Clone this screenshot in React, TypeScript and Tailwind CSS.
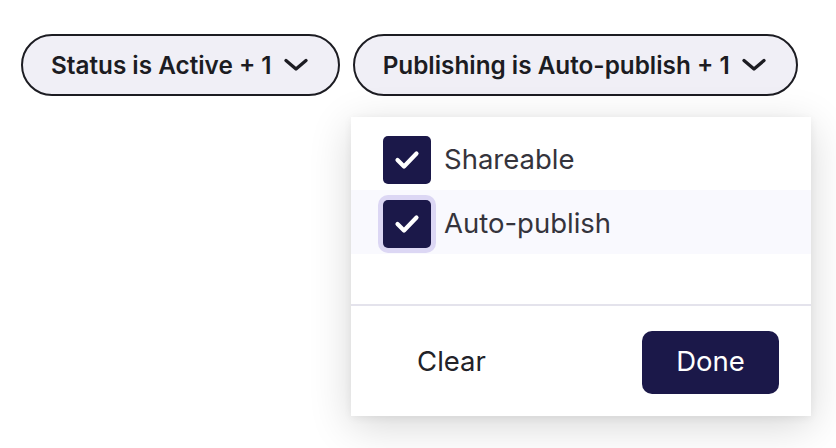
import React from 'react';

const Chevron = () => (
  <svg width="24" height="14" viewBox="0 0 24 14" fill="none" className="shrink-0">
    <path d="M2 2.5L12 11L22 2.5" stroke="#1c1c22" strokeWidth="3.3" strokeLinecap="round" strokeLinejoin="round" />
  </svg>
);

const Check = () => (
  <svg width="48" height="48" viewBox="0 0 48 48" fill="none">
    <path d="M14.5 24L21 30.5L33.5 17.5" stroke="white" strokeWidth="4.2" strokeLinecap="round" strokeLinejoin="round" />
  </svg>
);

const FilterPill = ({ label }: { label: string }) => (
  <button
    type="button"
    className="flex items-center gap-[12px] h-[62px] pl-[28px] pr-[30px] rounded-full border-2 border-[#1c1c22] bg-[#f0eff6] text-[24.3px] leading-none font-semibold text-[#1c1c22]"
  >
    <span>{label}</span>
    <Chevron />
  </button>
);

const OptionRow = ({ label, focused }: { label: string; focused?: boolean }) => (
  <div className={`flex items-center h-[64px] pl-[32px] pt-[3px] gap-[13px] ${focused ? 'bg-[#f9f9fe]' : ''}`}>
    <div
      className={`w-[48px] h-[48px] rounded-[5px] bg-[#1b1849] flex items-center justify-center shrink-0 ${
        focused ? 'ring-[5px] ring-[#dcd7f4]' : ''
      }`}
    >
      <Check />
    </div>
    <span className="text-[27.5px] leading-none text-[#35343c]">{label}</span>
  </div>
);

export default function App() {
  return (
    <div className="relative w-[836px] h-[448px] bg-white overflow-hidden" style={{ fontFamily: 'Inter, "Noto Sans", sans-serif' }}>
      <div className="flex gap-[13px] pl-[21px] pt-[34px]">
        <FilterPill label="Status is Active + 1" />
        <FilterPill label="Publishing is Auto-publish + 1" />
      </div>

      {/* Dropdown for publishing filter */}
      <div className="absolute left-[351px] top-[117px] w-[460px] h-[299px] bg-white flex flex-col shadow-[0_10px_40px_rgba(0,0,0,0.16),0_2px_8px_rgba(0,0,0,0.06)]">
        <div className="pt-[9px] flex-1">
          <OptionRow label="Shareable" />
          <OptionRow label="Auto-publish" focused />
        </div>
        <div className="border-t-2 border-[#e4e3ec] h-[112px] flex items-center justify-between px-[32px] pt-[2px]">
          <button type="button" className="w-[137px] h-[63px] text-[27.5px] text-[#222228] rounded-[10px]">
            Clear
          </button>
          <button type="button" className="w-[137px] h-[63px] text-[27.5px] text-white bg-[#1b1849] rounded-[10px]">
            Done
          </button>
        </div>
      </div>
    </div>
  );
}
